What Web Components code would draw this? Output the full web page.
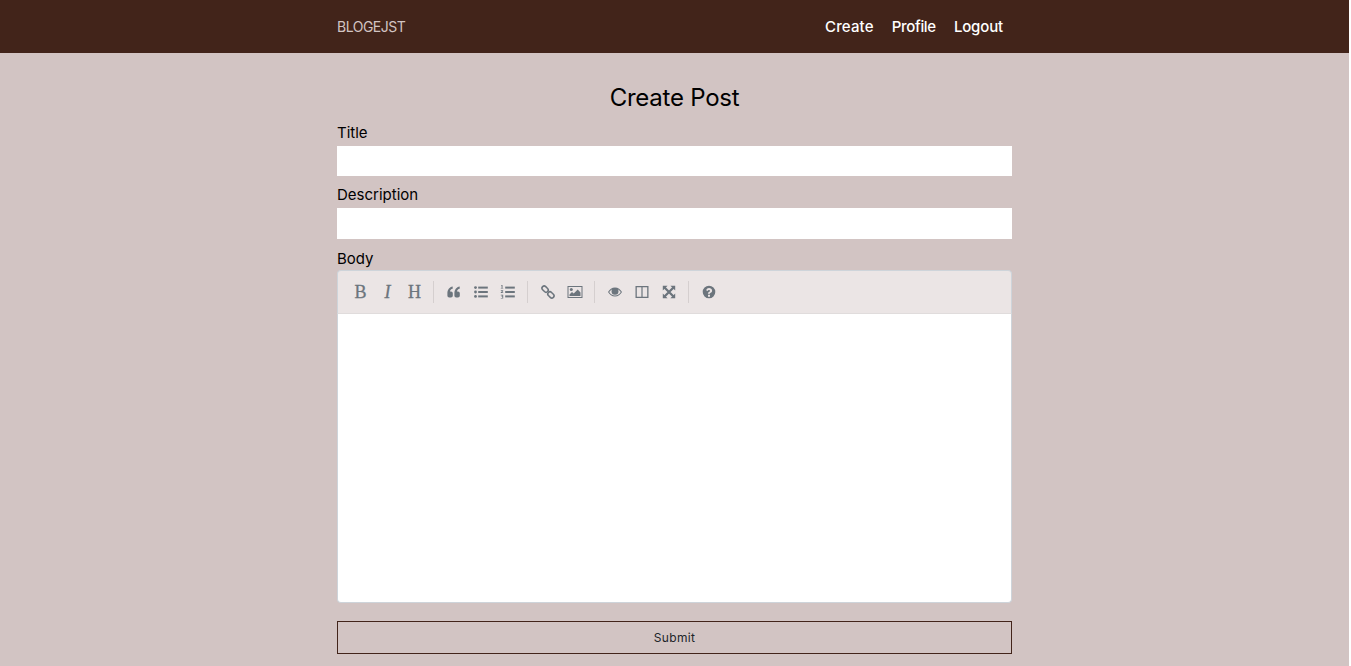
<!DOCTYPE html>
<html lang="en">
<head>
<meta charset="utf-8">
<title>BLOGEJST</title>
<style>
  html, body { margin: 0; padding: 0; }
  html { background: #fff; }
  body {
    width: 1349px;
    height: 666px;
    overflow: hidden;
    background: #d2c4c3;
    font-family: Inter, "Liberation Sans", sans-serif;
    color: #000;
  }
</style>
</head>
<body>
<site-nav>
  <nav-link style="--tracking: 0.15px">Create</nav-link>
  <nav-link style="--tracking: -0.3px">Profile</nav-link>
  <nav-link style="--tracking: -0.15px">Logout</nav-link>
</site-nav>
<post-form></post-form>

<script>
const navTemplate = document.createElement('template');
navTemplate.innerHTML = `
<style>
  :host { display: block; background: #42241a; height: 53px; }
  .inner {
    width: 675px;
    height: 52px;
    margin: 0 auto;
    display: flex;
    align-items: center;
    justify-content: space-between;
  }
  .brand { color: #d2c4c3; font-size: 14px; letter-spacing: -0.5px; }
  .links { display: flex; gap: 18px; padding-right: 9px; }
</style>
<div class="inner">
  <span class="brand">BLOGEJST</span>
  <div class="links"><slot></slot></div>
</div>
`;
class SiteNav extends HTMLElement {
  constructor() {
    super();
    this.attachShadow({ mode: 'open' }).appendChild(navTemplate.content.cloneNode(true));
  }
}
customElements.define('site-nav', SiteNav);

class NavLink extends HTMLElement {
  constructor() {
    super();
    this.attachShadow({ mode: 'open' }).innerHTML = `
<style>
  :host {
    display: block;
    color: #fff;
    font-size: 15px;
    font-weight: 500;
    letter-spacing: var(--tracking, 0);
  }
</style>
<slot></slot>`;
  }
}
customElements.define('nav-link', NavLink);

const fieldTemplate = document.createElement('template');
fieldTemplate.innerHTML = `
<style>
  :host { display: block; }
  label { display: block; font-size: 15px; line-height: 26px; height: 26px; }
  input {
    display: block;
    box-sizing: border-box;
    width: 100%;
    height: var(--field-height, 30px);
    border: 0;
    padding: 0 8px;
    background: #fff;
  }
</style>
<label></label>
<input type="text">
`;
class TextField extends HTMLElement {
  constructor() {
    super();
    this.attachShadow({ mode: 'open' }).appendChild(fieldTemplate.content.cloneNode(true));
  }
  connectedCallback() {
    this.shadowRoot.querySelector('label').textContent = this.getAttribute('label');
  }
}
customElements.define('text-field', TextField);

// toolbar icons, all on a 16 grid
const QUOTE_MARK = 'M1.400 9.500C1.400 5.500 3.400 3 6.700 2.500v2.200C5 5 4.100 6 4 7.400h1a1.800 1.800 0 0 1 1.800 1.800v2.500A1.800 1.800 0 0 1 5 13.500H3.200a1.800 1.800 0 0 1-1.800-1.800z';
const BARS = '<rect x="5.200" y="2.600" width="9.600" height="2"/><rect x="5.200" y="7" width="9.600" height="2"/><rect x="5.200" y="11.400" width="9.600" height="2"/>';
const ICONS = {
  quote: `<path d="${QUOTE_MARK}"/><path transform="translate(7 0)" d="${QUOTE_MARK}"/>`,
  ul: `<circle cx="2.500" cy="3.600" r="1.400"/><circle cx="2.500" cy="8" r="1.400"/><circle cx="2.500" cy="12.400" r="1.400"/>${BARS}`,
  ol: `${BARS}<path d="M1.200 1h1.300v2.900h.7v.7H.8v-.7h.8V1.800h-.4zM.8 6.200h2.400v.9L2 8.300h1.200V9H.8v-.8l1.400-1.300H.8zM.8 10.800h2.400v3.800H.8v-.7h1.500v-.8h-.9v-.7h.9v-.8H.8z"/>`,
  link: '<g fill="none" stroke="currentColor" stroke-width="1.500"><rect x="1.600" y="2.900" width="7" height="4.400" rx="2.200" transform="rotate(45 5.100 5.100)"/><rect x="7.400" y="8.700" width="7" height="4.400" rx="2.200" transform="rotate(45 10.900 10.900)"/></g>',
  image: '<path fill-rule="evenodd" d="M.5 2h15v12H.5zM1.500 3v10h13V3z"/><circle cx="4.300" cy="5.500" r="1.500"/><path d="M2.500 12v-1.600l2.500-2.300 1.700 1.500 4-4.200 2.800 3V12z"/>',
  eye: '<path fill-rule="evenodd" d="M8 3.500c3 0 5.500 1.800 7 4.500-1.500 2.700-4 4.500-7 4.500S2.500 10.700 1 8c1.500-2.700 4-4.500 7-4.500zM2.200 8c1.200 2 3.400 3.500 5.800 3.500 2.700 0 4.600-1.500 5.800-3.500-.8-1.200-1.800-2.200-3-2.800.4.600.7 1.300.7 2.100a3.500 3.500 0 1 1-7 0c0-.8.300-1.500.7-2.100C4 5.800 3 6.800 2.200 8z"/>',
  columns: '<path fill-rule="evenodd" d="M1.500 2h13v12h-13zM2.800 3.300v9.400h4.600V3.300zM8.600 3.300v9.400h4.600V3.300z"/>',
  fullscreen: '<path d="M1.800 1.800h4.800L1.800 6.600zM14.200 1.800v4.800L9.400 1.800zM1.800 14.200V9.400l4.800 4.800zM14.200 14.200H9.400l4.800-4.800z"/><path d="M3.500 3.500l9 9M12.500 3.500l-9 9" fill="none" stroke="currentColor" stroke-width="2.300"/>',
  help: '<path fill-rule="evenodd" d="M8 1.700a6.300 6.300 0 1 1 0 12.600 6.300 6.300 0 0 1 0-12.600zM7 10.800v1.900h2v-1.900zM5.200 6.300l1.400.8c.2-.7.700-1.100 1.300-1.100.6 0 1.100.3 1.100.8 0 .5-.4.800-1 1.200-.7.400-1.100.9-1.100 1.800h2c0-.4.200-.6.800-1 .8-.5 1.400-1.100 1.400-2.100C11.100 5 9.700 4 8 4 6.700 4 5.700 4.800 5.200 6.300z"/>'
};

class ToolButton extends HTMLElement {
  constructor() {
    super();
    this.attachShadow({ mode: 'open' }).innerHTML = `
<style>
  :host {
    display: flex;
    box-sizing: border-box;
    width: 27px;
    height: 26px;
    align-items: center;
    justify-content: center;
    color: #6c757d;
    font-family: "Liberation Serif", serif;
    font-size: 18px;
  }
  :host(:not([icon])) { padding-left: 2px; -webkit-text-stroke: 0.3px #6c757d; }
  svg { width: 16px; height: 16px; fill: currentColor; display: block; }
</style>
<slot></slot>`;
  }
  connectedCallback() {
    const name = this.getAttribute('icon');
    if (name) {
      this.shadowRoot.innerHTML += `<svg viewBox="0 0 16 16" aria-hidden="true">${ICONS[name]}</svg>`;
    }
  }
}
customElements.define('tool-button', ToolButton);

const editorTemplate = document.createElement('template');
editorTemplate.innerHTML = `
<style>
  :host { display: block; }
  .toolbar {
    box-sizing: border-box;
    height: 44px;
    display: flex;
    align-items: center;
    padding: 0 8px;
    background: #ebe5e5;
    border: 1px solid #ced4da;
    border-bottom: 1px solid #e0dcdc;
    border-radius: 4px 4px 0 0;
  }
  .sep { width: 1px; height: 22px; margin: 0 6px; background: #d5cfcf; }
  .body {
    box-sizing: border-box;
    height: 289px;
    background: #fff;
    border: 1px solid #ced4da;
    border-top: 0;
    border-radius: 0 0 4px 4px;
  }
  .i { font-style: italic; }
</style>
<div class="toolbar">
  <tool-button>B</tool-button>
  <tool-button class="i">I</tool-button>
  <tool-button>H</tool-button>
  <span class="sep"></span>
  <tool-button icon="quote"></tool-button>
  <tool-button icon="ul"></tool-button>
  <tool-button icon="ol"></tool-button>
  <span class="sep"></span>
  <tool-button icon="link"></tool-button>
  <tool-button icon="image"></tool-button>
  <span class="sep"></span>
  <tool-button icon="eye"></tool-button>
  <tool-button icon="columns"></tool-button>
  <tool-button icon="fullscreen"></tool-button>
  <span class="sep"></span>
  <tool-button icon="help"></tool-button>
</div>
<div class="body"></div>
`;
class MarkdownEditor extends HTMLElement {
  constructor() {
    super();
    this.attachShadow({ mode: 'open' }).appendChild(editorTemplate.content.cloneNode(true));
  }
}
customElements.define('markdown-editor', MarkdownEditor);

const formTemplate = document.createElement('template');
formTemplate.innerHTML = `
<style>
  :host { display: block; width: 675px; margin: 0 auto; }
  h1 {
    margin: 0;
    padding-top: 28px;
    height: 39px;
    line-height: 33px;
    text-align: center;
    font-size: 24px;
    font-weight: 400;
    letter-spacing: -0.25px;
  }
  .desc { margin-top: 6px; --field-height: 31px; }
  .label { display: block; font-size: 15px; line-height: 26px; margin-top: 7px; height: 24px; }
  button {
    display: block;
    box-sizing: border-box;
    width: 100%;
    height: 33px;
    margin-top: 18px;
    padding: 0;
    background: transparent;
    border: 1px solid #42241a;
    font: inherit;
    font-size: 12px;
    letter-spacing: 0.3px;
    color: #212529;
  }
</style>
<h1>Create Post</h1>
<text-field label="Title"></text-field>
<text-field class="desc" label="Description"></text-field>
<span class="label">Body</span>
<markdown-editor></markdown-editor>
<button type="button">Submit</button>
`;
class PostForm extends HTMLElement {
  constructor() {
    super();
    this.attachShadow({ mode: 'open' }).appendChild(formTemplate.content.cloneNode(true));
  }
}
customElements.define('post-form', PostForm);
</script>
</body>
</html>
